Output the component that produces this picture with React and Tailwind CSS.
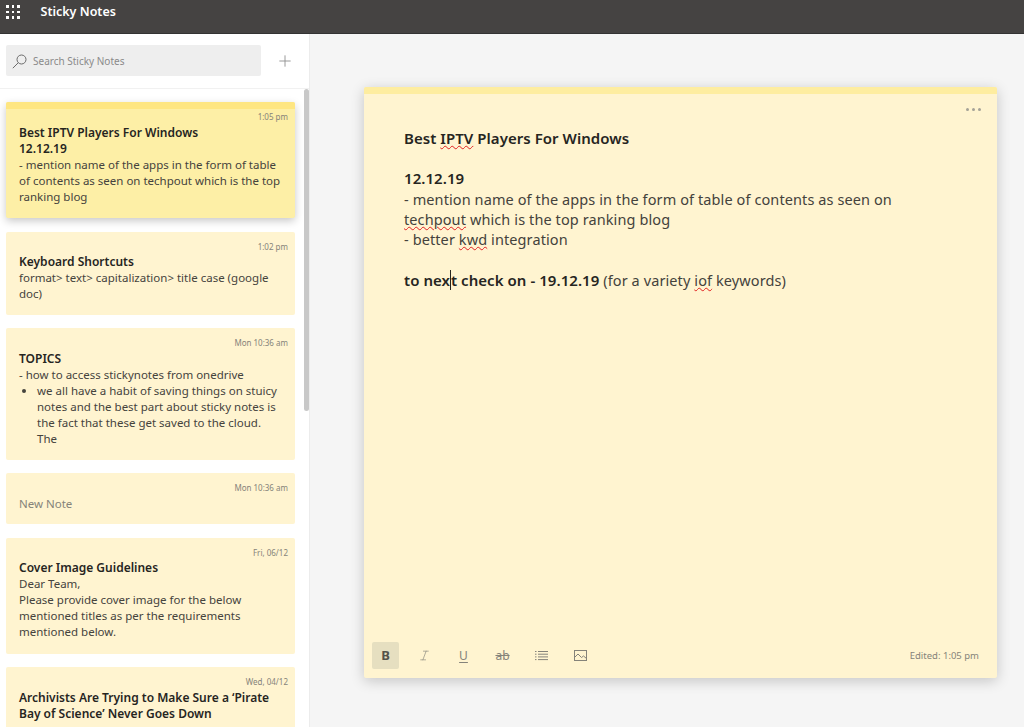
import { Italic, Plus } from 'lucide-react'

const FONT = { fontFamily: '"Noto Sans", "Open Sans", sans-serif' }

function Misspelt({ children }) {
  return <span className="underline decoration-wavy decoration-[#e02020] decoration-1 underline-offset-1">{children}</span>
}

function NoteCard({ time, active, children, className = '' }) {
  return (
    <article className={`rounded-[2px] ${active ? 'bg-[#fdefa6] shadow-[0_3px_8px_rgba(0,0,0,0.22)]' : 'bg-[#fff4d0]'} ${className}`}>
      <div className={`h-[7px] rounded-t-[2px] ${active ? 'bg-[#fee682]' : ''}`} />
      <div className="pt-px">
        <p className="pr-[7px] text-right text-[8px] leading-[14px] text-[#85837a]">{time}</p>
        <div className="pl-[13px] pr-[11px] pt-[0.6px] text-[11.5px] leading-[16px] text-[#45433d]">{children}</div>
      </div>
    </article>
  )
}

function CardTitle({ children }) {
  return <p className="text-[12px] font-semibold text-[#26251f]">{children}</p>
}

function SearchIcon() {
  return (
    <svg width="15" height="15" viewBox="0 0 15 15" fill="none" stroke="currentColor" strokeWidth="1">
      <circle cx="9.5" cy="5.5" r="4.5" />
      <path d="M6.2 8.8L0.8 14.2" />
    </svg>
  )
}

function ListIcon() {
  return (
    <svg width="13" height="11" viewBox="0 0 13 11" fill="none" stroke="currentColor" strokeWidth="1">
      <path d="M3 1.5h10M3 4.2h10M3 6.9h10M3 9.6h10" />
      <path d="M0 1.5h1.5M0 4.2h1.5M0 6.9h1.5M0 9.6h1.5" />
    </svg>
  )
}

function PictureIcon() {
  return (
    <svg width="13" height="11" viewBox="0 0 13 11" fill="none" stroke="currentColor" strokeWidth="1">
      <rect x="0.5" y="0.5" width="12" height="10" />
      <path d="M1 7l3-3 3.5 3.5L9.5 6l3 2.5" />
    </svg>
  )
}

export default function App() {
  return (
    <div className="flex h-[727px] w-[1024px] flex-col overflow-hidden bg-[#f5f5f5]" style={FONT}>
      <header className="flex h-[34px] shrink-0 items-center border-b border-[#333] bg-[#454342] pb-[9px]">
        <div className="ml-[6px] grid grid-cols-3 gap-[3px]">
          {Array.from({ length: 9 }).map((_, i) => (
            <span key={i} className="h-[2.5px] w-[2.5px] bg-white" />
          ))}
        </div>
        <h1 className="ml-[21px] text-[12.5px] font-semibold text-white">Sticky Notes</h1>
      </header>

      <div className="flex min-h-0 flex-1">
        <aside className="relative flex w-[310px] shrink-0 flex-col overflow-hidden border-r border-[#ececec] bg-white">
          <div className="flex h-[55px] shrink-0 items-start border-b border-[#f1f1f1] pl-[6px] pt-[11px]">
            <div className="flex h-[31px] w-[255px] items-center rounded-[2px] bg-[#eeeeee] pl-[6px] pt-px text-[#6b6b6b]">
              <SearchIcon />
              <span className="ml-[6px] text-[10px] text-[#8a8a8a]">Search Sticky Notes</span>
            </div>
            <Plus size={18} strokeWidth={1.2} className="ml-[15px] mt-[7px] text-[#8f8f8f]" />
          </div>

          <div className="absolute right-0 top-[55px] h-[322px] w-[5px] rounded-full bg-[#c8c8c8]" />

          <div className="flex w-[289px] flex-col gap-[13.4px] pl-[6px] pt-[13.2px] box-content">
            <NoteCard active time="1:05 pm" className="h-[116px]">
              <CardTitle>Best IPTV Players For Windows</CardTitle>
              <CardTitle>12.12.19</CardTitle>
              <p>- mention name of the apps in the form of table of contents as seen on techpout which is the top ranking blog</p>
            </NoteCard>
            <NoteCard time="1:02 pm" className="h-[83px]">
              <CardTitle>Keyboard Shortcuts</CardTitle>
              <p>format&gt; text&gt; capitalization&gt; title case (google doc)</p>
            </NoteCard>
            <NoteCard time="Mon 10:36 am" className="h-[132px]">
              <CardTitle>TOPICS</CardTitle>
              <p>- how to access stickynotes from onedrive</p>
              <ul className="list-disc pl-[18px] pr-[4px]">
                <li>we all have a habit of saving things on stuicy notes and the best part about sticky notes is the fact that these get saved to the cloud. The</li>
              </ul>
            </NoteCard>
            <NoteCard time="Mon 10:36 am" className="h-[51px]">
              <p className="text-[#85837a]">New Note</p>
            </NoteCard>
            <NoteCard time="Fri, 06/12" className="h-[116px]">
              <CardTitle>Cover Image Guidelines</CardTitle>
              <p>Dear Team,</p>
              <p>Please provide cover image for the below mentioned titles as per the requirements mentioned below.</p>
            </NoteCard>
            <NoteCard time="Wed, 04/12" className="h-[90px]">
              <CardTitle>Archivists Are Trying to Make Sure a ‘Pirate Bay of Science’ Never Goes Down</CardTitle>
            </NoteCard>
          </div>
        </aside>

        <main className="min-w-0 flex-1 pl-[54px] pt-[53px]">
          <section className="flex h-[591px] w-[633px] flex-col rounded-[2px] bg-[#fff4d0] shadow-[0_3px_14px_rgba(0,0,0,0.2)]">
            <div className="h-[7px] shrink-0 rounded-t-[2px] bg-[#feeda0]" />
            <div className="flex justify-end gap-[3px] pr-[16px] pt-[14px]">
              <span className="h-[3px] w-[3px] rounded-full bg-[#a5a297]" />
              <span className="h-[3px] w-[3px] rounded-full bg-[#a5a297]" />
              <span className="h-[3px] w-[3px] rounded-full bg-[#a5a297]" />
            </div>
            <div className="flex-1 pl-[40px] pr-[60px] pt-[17px] text-[14.5px] leading-[20.3px] tracking-[0.1px] text-[#44423c]">
              <p className="text-[15px] font-semibold tracking-[0.05px] text-[#26251f]">Best <Misspelt>IPTV</Misspelt> Players For Windows</p>
              <p className="mt-[20px] text-[15px] font-semibold tracking-[0.05px] text-[#26251f]">12.12.19</p>
              <p>- mention name of the apps in the form of table of contents as seen on <Misspelt>techpout</Misspelt> which is the top ranking blog</p>
              <p>- better <Misspelt>kwd</Misspelt> integration</p>
              <p className="mt-[20.3px]">
                <span className="text-[15px] font-semibold tracking-[0.05px] text-[#26251f]">to nex<span className="border-l border-[#26251f]">t</span> check on - 19.12.19</span> (for a variety <Misspelt>iof</Misspelt> keywords)
              </p>
            </div>
            <footer className="flex h-[36px] shrink-0 items-start pl-[8px] pr-[18px] text-[#85837a]">
              <span className="mr-[12px] flex h-[27px] w-[27px] items-center justify-center rounded-[2px] bg-[#e6dfc0] text-[13px] font-bold text-[#55534a]">B</span>
              <span className="mr-[12px] flex h-[27px] w-[27px] items-center justify-center"><Italic size={13} strokeWidth={1.2} /></span>
              <span className="mr-[12px] flex h-[27px] w-[27px] items-center justify-center text-[12px] underline underline-offset-2">U</span>
              <span className="mr-[12px] flex h-[27px] w-[27px] items-center justify-center text-[12px] line-through">ab</span>
              <span className="mr-[12px] flex h-[27px] w-[27px] items-center justify-center"><ListIcon /></span>
              <span className="mr-[12px] flex h-[27px] w-[27px] items-center justify-center"><PictureIcon /></span>
              <span className="ml-auto mt-[7px] text-[9.5px]">Edited: 1:05 pm</span>
            </footer>
          </section>
        </main>
      </div>
    </div>
  )
}
